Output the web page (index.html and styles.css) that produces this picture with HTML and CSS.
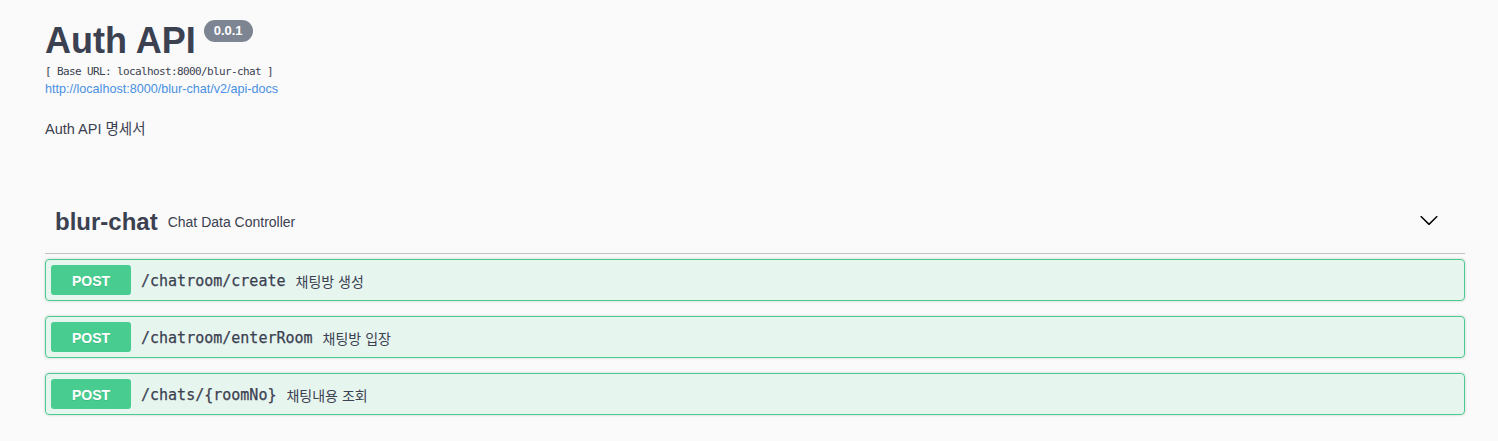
FILE: index.html
```html
<!DOCTYPE html>
<html lang="ko">
<head>
<meta charset="utf-8">
<title>Auth API</title>
<link rel="stylesheet" href="styles.css">
</head>
<body>
<div class="wrapper">
  <section class="info">
    <div class="title-row">
      <h2 class="title">Auth API</h2>
      <span class="version">0.0.1</span>
    </div>
    <div class="base-url">[ Base URL: localhost:8000/blur-chat ]</div>
    <a class="spec-link" href="#">http://localhost:8000/blur-chat/v2/api-docs</a>
    <p class="description">Auth API 명세서</p>
  </section>

  <section class="tag-section">
    <div class="tag-row">
      <h3 class="tag-name">blur-chat</h3>
      <span class="tag-desc">Chat Data Controller</span>
      <svg class="chevron" width="20" height="20" viewBox="0 0 20 20"><path d="M17.418 6.109c.272-.268.709-.268.979 0s.271.701 0 .969l-7.908 7.83c-.27.268-.707.268-.979 0l-7.908-7.83c-.27-.268-.27-.701 0-.969.271-.268.709-.268.979 0L10 13.25l7.418-7.141z"/></svg>
    </div>
    <div class="opblock">
      <span class="method">POST</span>
      <span class="path">/chatroom/create</span>
      <span class="summary">채팅방 생성</span>
    </div>
    <div class="opblock">
      <span class="method">POST</span>
      <span class="path">/chatroom/enterRoom</span>
      <span class="summary">채팅방 입장</span>
    </div>
    <div class="opblock">
      <span class="method">POST</span>
      <span class="path">/chats/{roomNo}</span>
      <span class="summary">채팅내용 조회</span>
    </div>
  </section>
</div>
</body>
</html>
```

FILE: styles.css
```css
html, body {
  margin: 0;
  padding: 0;
  background: #fafafa;
}
body {
  font-family: "Liberation Sans", "Noto Sans CJK KR", sans-serif;
  color: #3b4151;
}
.wrapper {
  padding: 20px 33px 0 45px;
}
.info {
  display: flex;
  flex-direction: column;
  align-items: flex-start;
}
.title-row {
  display: flex;
  align-items: flex-start;
}
.title {
  margin: 0;
  font-size: 36px;
  line-height: 41px;
  font-weight: 700;
  color: #3b4151;
}
.version {
  margin-left: 8px;
  background: #7d8492;
  color: #fff;
  font-size: 13px;
  font-weight: 700;
  line-height: 16px;
  padding: 3px 10px;
  border-radius: 57px;
}
.base-url {
  margin-top: 4px;
  font-family: "DejaVu Sans Mono", "Liberation Mono", monospace;
  font-size: 11px;
  line-height: 14px;
  letter-spacing: -0.62px;
  color: #3b4151;
}
.spec-link {
  margin-top: 3px;
  font-size: 12.6px;
  line-height: 15px;
  color: #4990e2;
  text-decoration: none;
}
.description {
  margin: 22px 0 0;
  font-size: 14.5px;
  line-height: 20px;
  color: #3b4151;
}
.tag-section {
  margin-top: 55px;
}
.tag-row {
  display: flex;
  align-items: center;
  padding: 10px 26px 13px 10px;
  border-bottom: 1px solid rgba(59, 65, 81, 0.3);
  margin-bottom: 5px;
}
.tag-name {
  margin: 0;
  font-size: 24px;
  line-height: 36px;
  font-weight: 700;
  color: #3b4151;
}
.tag-desc {
  flex: 1;
  padding: 0 10px;
  font-size: 14px;
  line-height: 20px;
  color: #3b4151;
}
.chevron {
  margin-bottom: 5px;
  fill: #000;
}
.opblock {
  display: flex;
  align-items: center;
  padding: 5px;
  margin-bottom: 15px;
  border: 1px solid #49cc90;
  border-radius: 4px;
  background: rgba(73, 204, 144, 0.1);
  box-shadow: 0 0 3px rgba(0, 0, 0, 0.19);
}
.method {
  min-width: 80px;
  box-sizing: border-box;
  padding: 7px 15px 5px;
  text-align: center;
  font-size: 14px;
  line-height: 18px;
  font-weight: 700;
  color: #fff;
  background: #49cc90;
  border-radius: 3px;
  text-shadow: 0 1px 0 rgba(0, 0, 0, 0.1);
}
.path {
  padding: 0 10px;
  font-family: "DejaVu Sans Mono", "Liberation Mono", monospace;
  font-size: 15px;
  font-weight: 400;
  -webkit-text-stroke: 0.25px #3b4151;
  color: #3b4151;
  position: relative;
  top: 1px;
}
.summary {
  font-family: "Noto Sans CJK KR", sans-serif;
  font-size: 14px;
  color: #3b4151;
  position: relative;
  top: 1px;
}
```
